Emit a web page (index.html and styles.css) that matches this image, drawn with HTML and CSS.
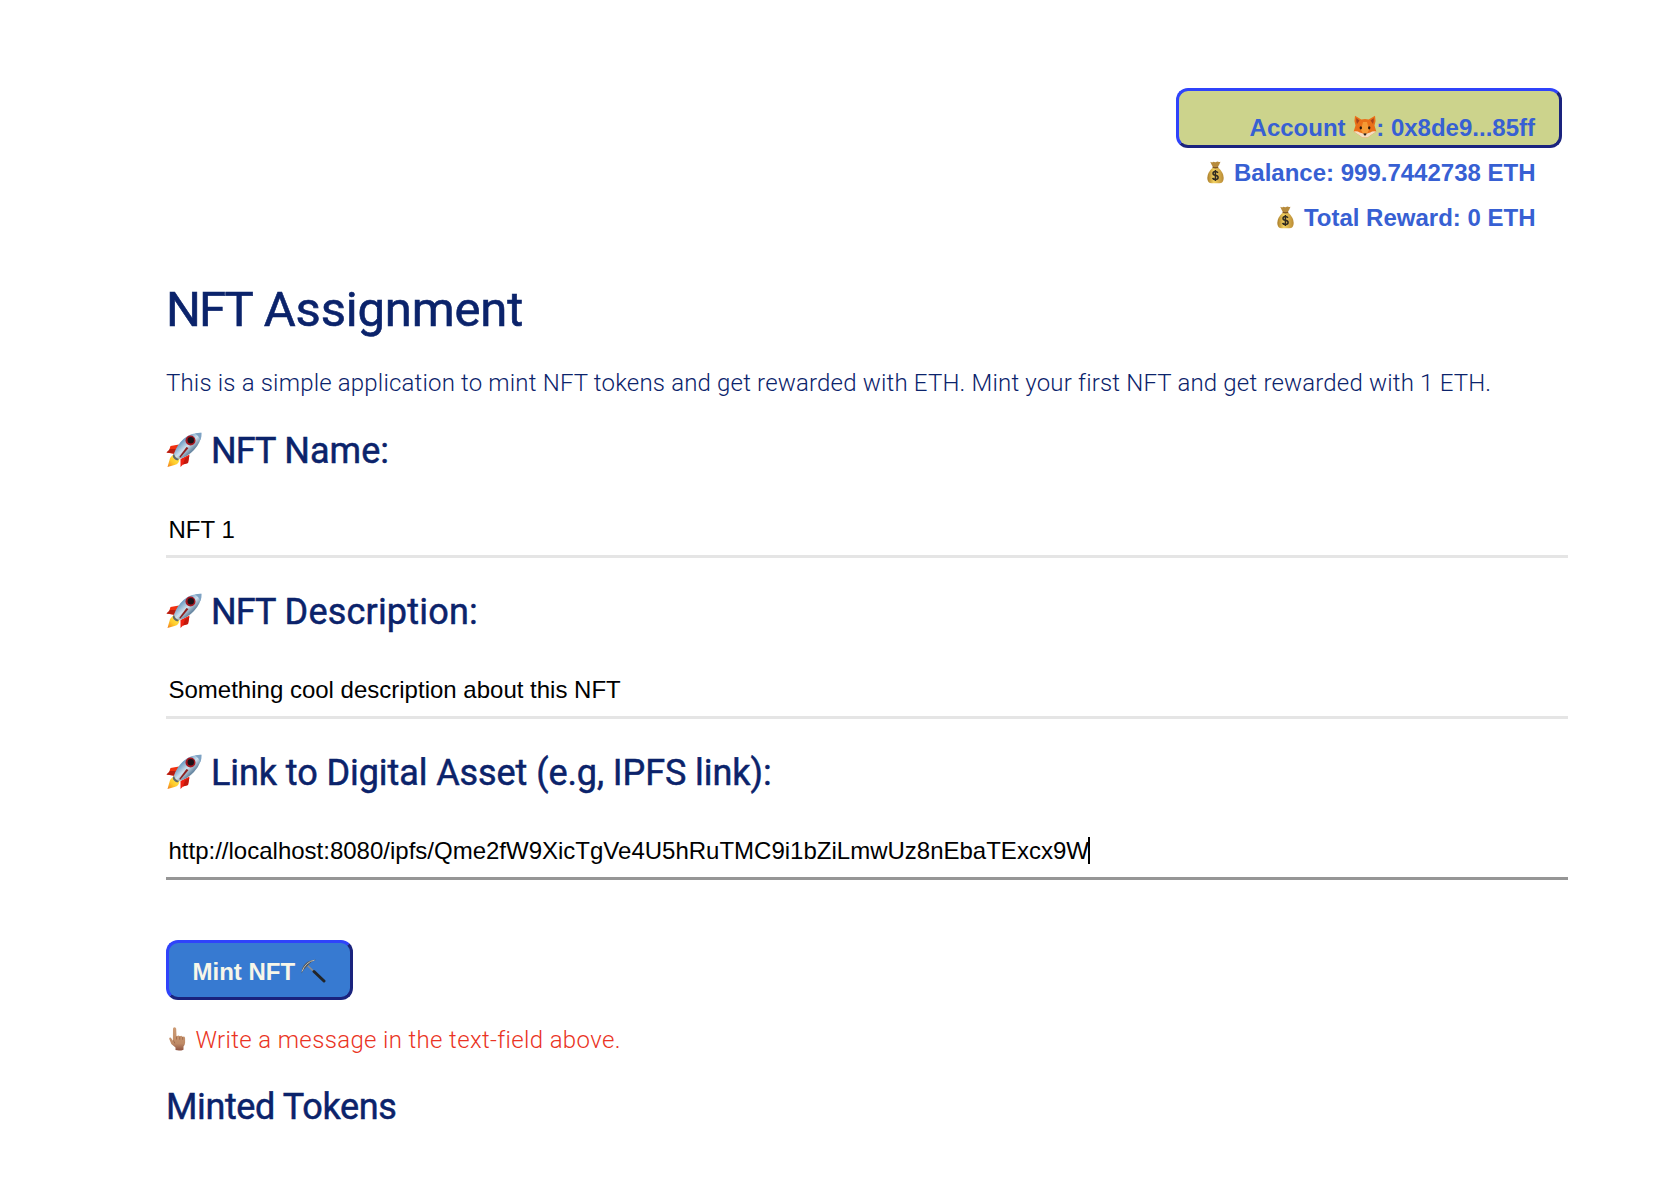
FILE: index.html
```html
<!DOCTYPE html>
<html lang="en">
<head>
<meta charset="utf-8">
<title>NFT Assignment</title>
<link rel="stylesheet" href="styles.css">
</head>
<body>
<svg class="defs" aria-hidden="true">
  <defs>
    <linearGradient id="hull" x1="0" y1="0" x2="1" y2="1"><stop offset="0" stop-color="#3f76ab"/><stop offset=".3" stop-color="#6d9bc2"/><stop offset=".5" stop-color="#cfe0ed"/><stop offset=".66" stop-color="#6d8ca6"/><stop offset="1" stop-color="#334a60"/></linearGradient>
    <linearGradient id="flame" x1="1" y1="0" x2="0" y2="1"><stop offset="0" stop-color="#fff45c"/><stop offset=".6" stop-color="#ffc928"/><stop offset="1" stop-color="#ef7a1c"/></linearGradient>
    <linearGradient id="gold" x1="0" y1="0" x2="1" y2="0"><stop offset="0" stop-color="#a97b28"/><stop offset=".4" stop-color="#f3d261"/><stop offset="1" stop-color="#b98a35"/></linearGradient>
    <linearGradient id="skin" x1="0" y1="0" x2="0" y2="1"><stop offset="0" stop-color="#cd9b74"/><stop offset=".7" stop-color="#bf8b67"/><stop offset="1" stop-color="#8e5240"/></linearGradient>
    <symbol id="rocket" viewBox="0 0 36 36">
      <path d="M13 12.500 4.500 14 3 18.500.5 20.500l8.500 1.500z" fill="#f0300f"/><path d="M.5 20.500 4 17l6 0-2 4.500z" fill="#b51c10"/>
      <path d="M23.500 22.500 22 31l-5 1.500-2.500 2.500 0-8z" fill="#ee2011"/><path d="M19 26.500l4.300-2.500-1.300 7-5 1.500z" fill="#c2180c"/>
      <path d="M8.500 22.500Q4 24 3.500 28L1.500 35l7-2Q13.500 32 13.500 26z" fill="url(#flame)"/>
      <path d="M35.500.8Q25 .5 17.500 7 11 13 8 21.500q1 4.500 5 5.500 9-2.500 15-9Q35.500 10 35.500.8z" fill="url(#hull)"/>
      <path d="M29 1.400Q32 .7 35.500.8 35.700 5 34.300 8.500q-1-4.500-5.300-7.100z" fill="#7ea3c4"/>
      <path d="M22.500 16 14.500 25.500q-1 .5-1-1L20.500 15z" fill="#8d2020"/>
      <circle cx="24.500" cy="8.500" r="5" fill="#a41620"/><circle cx="24.800" cy="8.200" r="3.200" fill="#1a1118"/>
      <path d="M8 21.500q1 4.500 5 5.500l-1.500 1.500Q7 27 6.700 23.500z" fill="#5d6870"/>
    </symbol>
    <symbol id="bag" viewBox="0 0 17 23">
      <path d="M3.200.8q2.500 1 3.200 0 2 1 3.800-.2 1.500.8 3.300.2-1 3-3 5.400l-4.200.2Q4.500 4 3.200.8z" fill="#b78b3c"/>
      <path d="M6.300 6h4.400q6 5.500 6 11 0 5.300-4.500 5.300H4.800Q.3 22.300.3 17q0-5.500 6-11z" fill="url(#gold)"/>
      <path d="M5.600 5.600q3 1 5.600 0v1.500q-3 .8-5.600 0z" fill="#7f5626"/>
      <path d="M11 11.700q-1-1.300-2.700-1.200-2.300.1-2.300 1.900 0 1.500 2.400 1.900 2.700.4 2.700 2.200 0 2-2.600 2-2.100 0-3-1.500M8.400 9v11" fill="none" stroke="#302a20" stroke-width="1.500"/>
    </symbol>
    <symbol id="fox" viewBox="0 0 24 24">
      <path d="M2 .8 8.300 4.500q3.700-1 7.400 0L22 .8q1.300 5-.5 9.700L23.300 16.500l-4.500 3L14.500 22.500h-5l-4.300-3L.7 16.500l1.800-6Q.7 5.800 2 .8z" fill="#ea7019"/>
      <path d="M3.300 3 6.500 5.500 4 9Q2.800 6 3.300 3zM20.700 3 17.500 5.500l2.500 3.500q1.200-3 .7-6z" fill="#a8431a"/>
      <path d="M.7 16.500q3.500-.9 6 .9L10 18.500h4l3.300-1.100q2.500-1.800 6-.9l-4.500 3-4.300 3h-5L5.200 19.500z" fill="#f5dfc4"/>
      <path d="M10 7h4l2 8-2 3.500h-4L8 15z" fill="#f59a35"/>
      <ellipse cx="7.800" cy="12.800" rx="1.200" ry="1.600" fill="#29190f"/><ellipse cx="16.200" cy="12.800" rx="1.200" ry="1.600" fill="#29190f"/>
      <path d="M10.200 18.700q1.800-.9 3.600 0l-1.800 2.300z" fill="#29201d"/>
    </symbol>
    <symbol id="pick" viewBox="0 0 25 25">
      <path d="M6.500 6.500 23 22" stroke="#8f8f8c" stroke-width="1.600"/>
      <path d="M13 12.500 23 22" stroke="#222529" stroke-width="3" stroke-linecap="round"/>
      <path d="M.6 14.500Q.5 8 4.500 4.500 9 .5 15 .8 10.500 2.500 7.800 5.500L5.500 7.700Q2.500 10.500.6 14.500z" fill="#55585a"/>
      <path d="M1 12.500Q2.500 8 6 4.800T13.500 1.200" fill="none" stroke="#b9b9b5" stroke-width="1"/>
    </symbol>
    <symbol id="point" viewBox="0 0 17 24">
      <path d="M4 1.800Q4 .3 5.500.3T7.200 1.800l.3 7.400 2-.6 1.300.7 1.600-.5 1.200 1 1.500-.2q1 .6 1 2v4.200q-.2 2.300-1.600 3.700v3.200q-3.800 1.500-8 .4v-2.600L2.300 17 .2 11.800q.2-1.700 1.700-1.100l2 3z" fill="url(#skin)"/>
      <path d="M7.500 9.500v3M10.700 9.500v3.200M13.600 10v2.700M4 13.500q1.800 1 1.800 3" fill="none" stroke="#8d573d" stroke-width=".6"/>
    </symbol>
  </defs>
</svg>
<main class="page">
  <header class="wallet">
    <button class="account"><span>Account </span><svg class="fox"><use href="#fox"/></svg><span>: 0x8de9...85ff</span></button>
    <p class="amount"><svg class="bag"><use href="#bag"/></svg><span>Balance: 999.7442738 ETH</span></p>
    <p class="amount"><svg class="bag"><use href="#bag"/></svg><span>Total Reward: 0 ETH</span></p>
  </header>
  <h1><span class="t-title"><b>NFT</b> Assignment</span></h1>
  <p class="intro"><span>This is a simple application to mint NFT tokens and get rewarded with ETH. Mint your first NFT and get rewarded with 1 ETH.</span></p>
  <section class="field">
    <h2><svg class="rocket"><use href="#rocket"/></svg><span class="t-name"><b>NFT</b> Name:</span></h2>
    <div class="input first"><span>NFT 1</span></div>
  </section>
  <section class="field">
    <h2><svg class="rocket"><use href="#rocket"/></svg><span class="t-desc"><b>NFT</b> Description:</span></h2>
    <div class="input"><span>Something cool description about this NFT</span></div>
  </section>
  <section class="field">
    <h2><svg class="rocket"><use href="#rocket"/></svg><span class="t-link">Link to Digital Asset (e.g, IPFS link):</span></h2>
    <div class="input focused"><span>http://localhost:8080/ipfs/Qme2fW9XicTgVe4U5hRuTMC9i1bZiLmwUz8nEbaTExcx9W</span><i class="caret"></i></div>
  </section>
  <button class="mint"><span>Mint NFT</span><svg class="pick"><use href="#pick"/></svg></button>
  <p class="status"><svg class="point"><use href="#point"/></svg><span>Write a message in the text-field above.</span></p>
  <h2 class="minted"><span class="t-minted">Minted Tokens</span></h2>
</main>
</body>
</html>
```
FILE: styles.css
```css
* { box-sizing: border-box; }
body { margin: 0; background: #fff; color: #0b236b; font-family: Roboto, sans-serif; }
.defs { position: absolute; width: 0; height: 0; }
.page { width: 1402px; margin: 0 0 0 166px; padding-top: 88px; }
h1, h2, p { margin: 0; }
svg { flex: none; }
span { white-space: pre; }
b { font-weight: inherit; letter-spacing: -1px; }
button { font-family: "Liberation Sans", Arial, sans-serif; font-weight: 700; font-size: 24px; }

.wallet { display: flex; flex-direction: column; align-items: flex-end; padding-right: 6px; font-family: "Liberation Sans", Arial, sans-serif; font-weight: 700; font-size: 24px; color: #3760d3; }
.account { display: flex; justify-content: flex-end; align-items: flex-start; width: 386px; height: 60px; margin-bottom: 2px; padding: 23px 24px 0 0; border: 3px solid; border-color: #2f43fb #1a237e #1a237e #2f43fb; border-radius: 12px; background: #ccd38c; color: #3760d3; line-height: 28px; }
.fox { width: 24px; height: 24px; margin: 1px -1px 0 1px; }
.amount { display: flex; align-items: center; height: 45px; padding-right: 26.5px; line-height: 45px; }
.bag { width: 17px; height: 23px; margin-right: 10px; }

h1 { margin-top: 40px; font-size: 49px; line-height: 60px; font-weight: 400; -webkit-text-stroke: .6px; }
h1 b { letter-spacing: -2px; }
.t-title { letter-spacing: -.18px; }
.intro { margin-top: 28px; font-size: 24px; line-height: 30px; font-weight: 300; letter-spacing: .175px; }
h2 { display: flex; font-size: 36px; line-height: 44px; font-weight: 400; -webkit-text-stroke: .5px; }
.t-name { letter-spacing: 0; }
.t-desc { letter-spacing: .2px; }
.t-link { letter-spacing: -.08px; }
.t-minted { letter-spacing: -.37px; }
.field { height: 129px; margin-bottom: 32px; }
.intro + .field { margin-top: 31px; }
.rocket { width: 36px; height: 36px; margin: 3px 9px 0 0; }
.input { display: flex; height: 85px; padding: 42px 0 0 2.5px; border-bottom: 3px solid #e5e5e5; font-family: "Liberation Sans", Arial, sans-serif; font-size: 24px; line-height: 28px; color: #000; }
.first { padding-top: 43px; }
.focused { border-color: #969696; }
.caret { width: 2px; height: 27px; margin-left: -1px; background: #000; }

.mint { display: flex; align-items: center; width: 187px; height: 60px; margin-top: 60px; padding: 0 0 0 23.5px; border: 3px solid; border-color: #2f43fb #1a237e #1a237e #2f43fb; border-radius: 12px; background: #377ad1; color: #f7f6e9; }
.mint span { padding-top: 3px; }
.pick { width: 25px; height: 25px; margin: 2px 0 0 6px; }
.status { display: flex; margin-top: 25px; font-size: 24px; line-height: 30px; font-weight: 300; letter-spacing: .35px; color: #ea3323; }
.point { width: 17px; height: 24px; margin: 2px 9.5px 0 3px; }
.minted { margin-top: 30px; }
```
